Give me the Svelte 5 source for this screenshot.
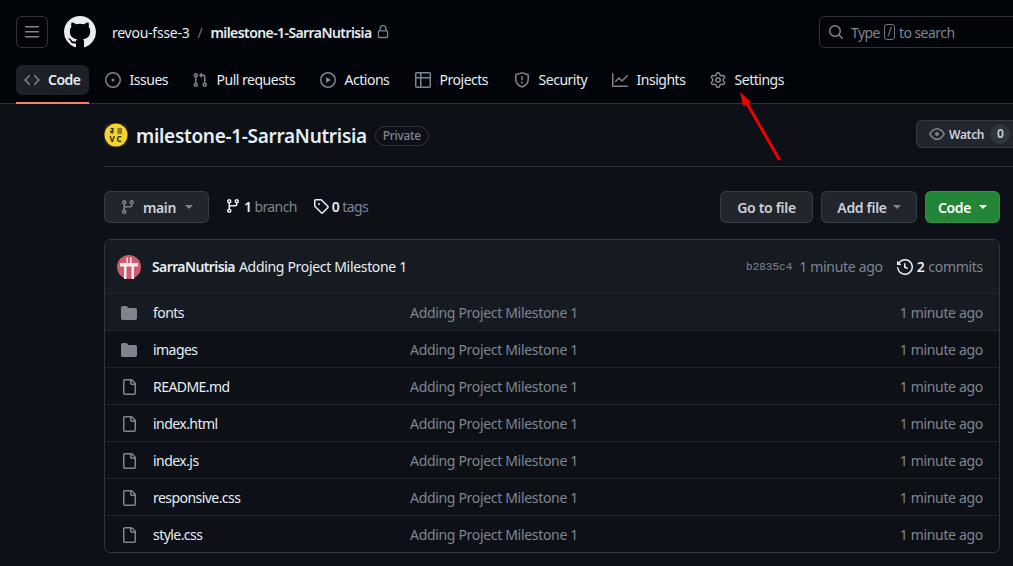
<script>
  const icons = {
    bars: 'M1 2.75A.75.75 0 0 1 1.75 2h12.5a.75.75 0 0 1 0 1.5H1.75A.75.75 0 0 1 1 2.75Zm0 5A.75.75 0 0 1 1.75 7h12.5a.75.75 0 0 1 0 1.5H1.75A.75.75 0 0 1 1 7.75ZM1.75 12h12.5a.75.75 0 0 1 0 1.5H1.75a.75.75 0 0 1 0-1.5Z',
    github: 'M8 0c4.42 0 8 3.58 8 8a8.013 8.013 0 0 1-5.45 7.59c-.4.08-.55-.17-.55-.38 0-.27.01-1.13.01-2.2 0-.75-.25-1.23-.54-1.48 1.78-.2 3.65-.88 3.65-3.95 0-.88-.31-1.59-.82-2.15.08-.2.36-1.02-.08-2.12 0 0-.67-.22-2.2.82-.64-.18-1.32-.27-2-.27-.68 0-1.36.09-2 .27-1.53-1.03-2.2-.82-2.2-.82-.44 1.1-.16 1.92-.08 2.12-.51.56-.82 1.28-.82 2.15 0 3.06 1.86 3.75 3.64 3.95-.23.2-.44.55-.51 1.07-.46.21-1.61.55-2.33-.66-.15-.24-.6-.83-1.23-.82-.67.01-.27.38.01.53.34.19.73.9.82 1.13.16.45.68 1.31 2.69.94 0 .67.01 1.3.01 1.49 0 .21-.15.45-.55.38A7.995 7.995 0 0 1 0 8c0-4.42 3.58-8 8-8Z',
    code: 'm11.28 3.22 4.25 4.25a.75.75 0 0 1 0 1.06l-4.25 4.25a.749.749 0 0 1-1.275-.326.749.749 0 0 1 .215-.734L13.94 8l-3.72-3.72a.749.749 0 0 1 .326-1.275.749.749 0 0 1 .734.215Zm-6.56 0a.751.751 0 0 1 1.042.018.751.751 0 0 1 .018 1.042L2.06 8l3.72 3.72a.749.749 0 0 1-.326 1.275.749.749 0 0 1-.734-.215L.47 8.53a.75.75 0 0 1 0-1.06Z',
    issue: 'M8 9.5a1.5 1.5 0 1 0 0-3 1.5 1.5 0 0 0 0 3ZM8 0a8 8 0 1 1 0 16A8 8 0 0 1 8 0ZM1.5 8a6.5 6.5 0 1 0 13 0 6.5 6.5 0 0 0-13 0Z',
    pull: 'M1.5 3.25a2.25 2.25 0 1 1 3 2.122v5.256a2.251 2.251 0 1 1-1.5 0V5.372A2.25 2.25 0 0 1 1.5 3.25Zm5.677-.177L9.573.677A.25.25 0 0 1 10 .854V2.5h1A2.5 2.5 0 0 1 13.5 5v5.628a2.251 2.251 0 1 1-1.5 0V5a1 1 0 0 0-1-1h-1v1.646a.25.25 0 0 1-.427.177L7.177 3.427a.25.25 0 0 1 0-.354ZM3.75 2.5a.75.75 0 1 0 0 1.5.75.75 0 0 0 0-1.5Zm0 9.5a.75.75 0 1 0 0 1.5.75.75 0 0 0 0-1.5Zm8.25.75a.75.75 0 1 0 1.5 0 .75.75 0 0 0-1.5 0Z',
    play: 'M8 0a8 8 0 1 1 0 16A8 8 0 0 1 8 0ZM1.5 8a6.5 6.5 0 1 0 13 0 6.5 6.5 0 0 0-13 0Zm4.879-2.773 4.264 2.559a.25.25 0 0 1 0 .428l-4.264 2.559A.25.25 0 0 1 6 10.559V5.442a.25.25 0 0 1 .379-.215Z',
    table: 'M0 1.75C0 .784.784 0 1.75 0h12.5C15.216 0 16 .784 16 1.75v12.5A1.75 1.75 0 0 1 14.25 16H1.75A1.75 1.75 0 0 1 0 14.25ZM6.5 6.5v8h7.75a.25.25 0 0 0 .25-.25V6.5Zm8-1.5V1.75a.25.25 0 0 0-.25-.25H6.5V5Zm-13 1.5v7.75c0 .138.112.25.25.25H5v-8ZM5 5V1.5H1.75a.25.25 0 0 0-.25.25V5Z',
    shield: 'M7.467.133a1.748 1.748 0 0 1 1.066 0l5.25 1.68A1.75 1.75 0 0 1 15 3.48V7c0 1.566-.32 3.182-1.303 4.682-.983 1.498-2.585 2.813-5.032 3.855a1.697 1.697 0 0 1-1.33 0c-2.447-1.042-4.049-2.357-5.032-3.855C1.32 10.182 1 8.566 1 7V3.48a1.75 1.75 0 0 1 1.217-1.667Zm.61 1.429a.25.25 0 0 0-.153 0l-5.25 1.68a.25.25 0 0 0-.174.238V7c0 1.358.275 2.666 1.057 3.86.784 1.194 2.121 2.34 4.366 3.297a.196.196 0 0 0 .154 0c2.245-.956 3.582-2.104 4.366-3.298C13.225 9.666 13.5 8.36 13.5 7V3.48a.251.251 0 0 0-.174-.237l-5.25-1.68ZM8.75 4.75v3a.75.75 0 0 1-1.5 0v-3a.75.75 0 0 1 1.5 0ZM9 10.5a1 1 0 1 1-2 0 1 1 0 0 1 2 0Z',
    graph: 'M1.5 1.75V13.5h13.75a.75.75 0 0 1 0 1.5H.75a.75.75 0 0 1-.75-.75V1.75a.75.75 0 0 1 1.5 0Zm14.28 2.53-5.25 5.25a.75.75 0 0 1-1.06 0L7 7.06 4.28 9.78a.751.751 0 0 1-1.042-.018.751.751 0 0 1-.018-1.042l3.25-3.25a.75.75 0 0 1 1.06 0L10 7.94l4.72-4.72a.751.751 0 0 1 1.042.018.751.751 0 0 1 .018 1.042Z',
    gear: 'M8 0a8.2 8.2 0 0 1 .701.031C9.444.095 9.99.645 10.16 1.29l.288 1.107c.018.066.079.158.212.224.231.114.454.243.668.386.123.082.233.09.299.071l1.103-.303c.644-.176 1.392.021 1.82.63.27.385.506.792.704 1.218.315.675.111 1.422-.364 1.891l-.814.806c-.049.048-.098.147-.088.294.016.257.016.515 0 .772-.01.147.038.246.088.294l.814.806c.475.469.679 1.216.364 1.891a7.977 7.977 0 0 1-.704 1.217c-.428.61-1.176.807-1.82.63l-1.102-.302c-.067-.019-.177-.011-.3.071a5.909 5.909 0 0 1-.668.386c-.133.066-.194.158-.211.224l-.29 1.106c-.168.646-.715 1.196-1.458 1.26a8.006 8.006 0 0 1-1.402 0c-.743-.064-1.289-.614-1.458-1.26l-.289-1.106c-.018-.066-.079-.158-.212-.224a5.738 5.738 0 0 1-.668-.386c-.123-.082-.233-.09-.299-.071l-1.103.303c-.644.176-1.392-.021-1.82-.63a8.12 8.12 0 0 1-.704-1.218c-.315-.675-.111-1.422.363-1.891l.815-.806c.05-.048.098-.147.088-.294a6.214 6.214 0 0 1 0-.772c.01-.147-.038-.246-.088-.294l-.815-.806C.635 6.045.431 5.298.746 4.623a7.92 7.92 0 0 1 .704-1.217c.428-.61 1.176-.807 1.82-.63l1.102.302c.067.019.177.011.3-.071.214-.143.437-.272.668-.386.133-.066.194-.158.211-.224l.29-1.106C6.009.645 6.556.095 7.299.03 7.53.01 7.764 0 8 0Zm-.571 1.525c-.036.003-.108.036-.137.146l-.289 1.105c-.147.561-.549.967-.998 1.189-.173.086-.34.183-.5.29-.417.278-.97.423-1.529.27l-1.103-.303c-.109-.03-.175.016-.195.045-.22.312-.412.644-.573.99-.014.031-.021.11.059.19l.815.806c.411.406.562.957.53 1.456a4.709 4.709 0 0 0 0 .582c.032.499-.119 1.05-.53 1.456l-.815.806c-.081.08-.073.159-.059.19.162.346.353.677.573.989.02.03.085.076.195.046l1.102-.303c.56-.153 1.113-.008 1.53.27.161.107.328.204.501.29.447.222.85.629.997 1.189l.289 1.105c.029.109.101.143.137.146a6.6 6.6 0 0 0 1.142 0c.036-.003.108-.036.137-.146l.289-1.105c.147-.561.549-.967.998-1.189.173-.086.34-.183.5-.29.417-.278.97-.423 1.529-.27l1.103.303c.109.029.175-.016.195-.045.22-.313.411-.644.573-.99.014-.031.021-.11-.059-.19l-.815-.806c-.411-.406-.562-.957-.53-1.456a4.709 4.709 0 0 0 0-.582c-.032-.499.119-1.05.53-1.456l.815-.806c.081-.08.073-.159.059-.19a6.464 6.464 0 0 0-.573-.989c-.02-.03-.085-.076-.195-.046l-1.102.303c-.56.153-1.113.008-1.53-.27a4.44 4.44 0 0 0-.501-.29c-.447-.222-.85-.629-.997-1.189l-.289-1.105c-.029-.11-.101-.143-.137-.146a6.6 6.6 0 0 0-1.142 0ZM11 8a3 3 0 1 1-6 0 3 3 0 0 1 6 0ZM9.5 8a1.5 1.5 0 1 0-3.001.001A1.5 1.5 0 0 0 9.5 8Z',
    lock: 'M4 4a4 4 0 0 1 8 0v2h.25c.966 0 1.75.784 1.75 1.75v5.5A1.75 1.75 0 0 1 12.25 15h-8.5A1.75 1.75 0 0 1 2 13.25v-5.5C2 6.784 2.784 6 3.75 6H4Zm8.25 3.5h-8.5a.25.25 0 0 0-.25.25v5.5c0 .138.112.25.25.25h8.5a.25.25 0 0 0 .25-.25v-5.5a.25.25 0 0 0-.25-.25ZM10.5 6V4a2.5 2.5 0 1 0-5 0v2Z',
    search: 'M10.68 11.74a6 6 0 0 1-7.922-8.982 6 6 0 0 1 8.982 7.922l3.04 3.04a.749.749 0 0 1-.326 1.275.749.749 0 0 1-.734-.215ZM11.5 7a4.499 4.499 0 1 0-8.997 0A4.499 4.499 0 0 0 11.5 7Z',
    eye: 'M8 2c1.981 0 3.671.992 4.933 2.078 1.27 1.091 2.187 2.345 2.637 3.023a1.62 1.62 0 0 1 0 1.798c-.45.678-1.367 1.932-2.637 3.023C11.67 13.008 9.981 14 8 14c-1.981 0-3.671-.992-4.933-2.078C1.797 10.83.88 9.576.43 8.898a1.62 1.62 0 0 1 0-1.798c.45-.677 1.367-1.931 2.637-3.022C4.33 2.992 6.019 2 8 2ZM1.679 7.932a.12.12 0 0 0 0 .136c.411.622 1.241 1.75 2.366 2.717C5.176 11.758 6.527 12.5 8 12.5c1.473 0 2.825-.742 3.955-1.715 1.124-.967 1.954-2.096 2.366-2.717a.12.12 0 0 0 0-.136c-.412-.621-1.242-1.75-2.366-2.717C10.824 4.242 9.473 3.5 8 3.5c-1.473 0-2.825.742-3.955 1.715-1.124.967-1.954 2.096-2.366 2.717ZM8 10a2 2 0 1 1-.001-3.999A2 2 0 0 1 8 10Z',
    branch: 'M9.5 3.25a2.25 2.25 0 1 1 3 2.122V6A2.5 2.5 0 0 1 10 8.5H6a1 1 0 0 0-1 1v1.128a2.251 2.251 0 1 1-1.5 0V5.372a2.25 2.25 0 1 1 1.5 0v1.836A2.493 2.493 0 0 1 6 7h4a1 1 0 0 0 1-1v-.628A2.25 2.25 0 0 1 9.5 3.25Zm-6 0a.75.75 0 1 0 1.5 0 .75.75 0 0 0-1.5 0Zm8.25-.75a.75.75 0 1 0 0 1.5.75.75 0 0 0 0-1.5ZM4.25 12a.75.75 0 1 0 0 1.5.75.75 0 0 0 0-1.5Z',
    tag: 'M1 7.775V2.75C1 1.784 1.784 1 2.75 1h5.025c.464 0 .91.184 1.238.513l6.25 6.25a1.75 1.75 0 0 1 0 2.474l-5.026 5.026a1.75 1.75 0 0 1-2.474 0l-6.25-6.25A1.752 1.752 0 0 1 1 7.775Zm1.5 0c0 .066.026.13.073.177l6.25 6.25a.25.25 0 0 0 .354 0l5.025-5.025a.25.25 0 0 0 0-.354l-6.25-6.25a.25.25 0 0 0-.177-.073H2.75a.25.25 0 0 0-.25.25ZM6 5a1 1 0 1 1 0 2 1 1 0 0 1 0-2Z',
    history: 'm.427 1.927 1.215 1.215a8.002 8.002 0 1 1-1.6 5.685.75.75 0 1 1 1.493-.154 6.5 6.5 0 1 0 1.18-4.458l1.358 1.358A.25.25 0 0 1 3.896 6H.25A.25.25 0 0 1 0 5.75V2.104a.25.25 0 0 1 .427-.177ZM7.75 4a.75.75 0 0 1 .75.75v2.992l2.028.812a.75.75 0 0 1-.557 1.392l-2.5-1A.751.751 0 0 1 7 8.25v-3.5A.75.75 0 0 1 7.75 4Z',
    file: 'M2 1.75C2 .784 2.784 0 3.75 0h6.586c.464 0 .909.184 1.237.513l2.914 2.914c.329.328.513.773.513 1.237v9.586A1.75 1.75 0 0 1 13.25 16h-9.5A1.75 1.75 0 0 1 2 14.25Zm1.75-.25a.25.25 0 0 0-.25.25v12.5c0 .138.112.25.25.25h9.5a.25.25 0 0 0 .25-.25V6h-2.75A1.75 1.75 0 0 1 9 4.25V1.5Zm6.75.062V4.25c0 .138.112.25.25.25h2.688l-.011-.013-2.914-2.914-.013-.011Z',
    folder: 'M1.75 1A1.75 1.75 0 0 0 0 2.75v10.5C0 14.216.784 15 1.75 15h12.5A1.75 1.75 0 0 0 16 13.25v-8.5A1.75 1.75 0 0 0 14.25 3H7.5a.25.25 0 0 1-.2-.1l-.9-1.2C6.07 1.26 5.55 1 5 1H1.75Z'
  }

  // width = distance to the next tab
  const tabs = [
    { name: 'Code', icon: 'code', width: 81, active: true },
    { name: 'Issues', icon: 'issue', width: 87 },
    { name: 'Pull requests', icon: 'pull', width: 128 },
    { name: 'Actions', icon: 'play', width: 95 },
    { name: 'Projects', icon: 'table', width: 99 },
    { name: 'Security', icon: 'shield', width: 98 },
    { name: 'Insights', icon: 'graph', width: 98 },
    { name: 'Settings', icon: 'gear', width: 90 }
  ]

  const files = [
    { name: 'fonts', icon: 'folder', hover: true },
    { name: 'images', icon: 'folder' },
    { name: 'README.md', icon: 'file' },
    { name: 'index.html', icon: 'file' },
    { name: 'index.js', icon: 'file' },
    { name: 'responsive.css', icon: 'file' },
    { name: 'style.css', icon: 'file' }
  ]
</script>

{#snippet icon(name, size = 16)}
  <svg class="icon" width={size} height={size} viewBox="0 0 16 16" fill="currentColor" fill-rule="evenodd"><path d={icons[name]} /></svg>
{/snippet}

<div class="page">
  <header>
    <div class="toprow">
      <button class="menu">{@render icon('bars')}</button>
      <span class="logo">{@render icon('github', 32)}</span>
      <div class="crumbs">
        <span>revou-fsse-3</span>
        <span class="slash">/</span>
        <strong>milestone-1-SarraNutrisia</strong>
        <span class="lock">{@render icon('lock', 14)}</span>
      </div>
      <div class="search">
        {@render icon('search')}
        <span>Type</span><kbd>/</kbd><span>to search</span>
      </div>
    </div>
    <nav>
      {#each tabs as tab}
        <div class="tabcell" style="width:{tab.width}px">
          <a class="tab" class:active={tab.active}>
            <span class="tabicon">{@render icon(tab.icon)}</span>
            <span class="tablabel">{tab.name}</span>
          </a>
        </div>
      {/each}
    </nav>
  </header>

  <main>
    <div class="repohead">
      <svg class="repoavatar" width="24" height="24" viewBox="0 0 24 24">
        <rect width="24" height="24" rx="6" fill="#1c1f26" />
        <circle cx="12" cy="12" r="11.5" fill="#f5d32e" />
        <path d="M6.5 5.5h2.5v2.6H7v2.4M7 8l2.2 2.4M13.5 6h4.5M13.5 8h4.5M13.5 10h4.5" fill="none" stroke="#222" stroke-width="1.1" />
        <text x="5.5" y="18.5" class="avatartext">V</text>
        <text x="12.5" y="18.5" class="avatartext">C</text>
      </svg>
      <h1>milestone-1-SarraNutrisia</h1>
      <span class="badge">Private</span>
      <button class="btn watch">{@render icon('eye')}<span>Watch</span><span class="count">0</span></button>
    </div>

    <div class="toolbar">
      <button class="btn branchbtn">
        <span class="muted">{@render icon('branch')}</span>
        <span>main</span>
        <i class="caret"></i>
      </button>
      <span class="stat">{@render icon('branch')}<b>1</b> branch</span>
      <span class="stat">{@render icon('tag')}<b>0</b> tags</span>
      <div class="spacer"></div>
      <button class="btn gotofile">Go to file</button>
      <button class="btn addfile">Add file <i class="caret"></i></button>
      <button class="btn green">Code <i class="caret"></i></button>
    </div>

    <div class="box">
      <div class="commit">
        <svg class="commitavatar" width="24" height="24" viewBox="0 0 24 24">
          <circle cx="12" cy="12" r="12" fill="#cf5a70" />
          <path d="M3 8h18v3.500h-4V24h-2.500V11.500h-5V24H7V11.500H3zM9.500 2.500h1.500v5.500H9.500zM13 2.500h1.500v5.500H13z" fill="#f3eaea" />
        </svg>
        <b>SarraNutrisia</b>
        <span class="commitmsg">Adding Project Milestone 1</span>
        <div class="spacer"></div>
        <code>b2835c4</code>
        <span class="ago">1 minute ago</span>
        <span class="commits">{@render icon('history')}<b>2</b> commits</span>
      </div>
      {#each files as file}
        <div class="row" class:hover={file.hover}>
          <span class="fileicon">{@render icon(file.icon)}</span>
          <span class="filename">{file.name}</span>
          <span class="filemsg">Adding Project Milestone 1</span>
          <span class="filetime">1 minute ago</span>
        </div>
      {/each}
    </div>
  </main>

  <!-- annotation drawn on top of the screenshot -->
  <svg class="arrow" width="60" height="80" viewBox="0 0 60 80">
    <path d="M40 69 6 10" stroke="#f00000" stroke-width="3" stroke-linecap="round" />
    <path d="M1 2 12 12 4 16Z" fill="#f00000" />
  </svg>
</div>

<style>
  :global(body) {
    margin: 0;
    background: #0d1117;
  }

  .page {
    position: relative;
    width: 1013px;
    height: 566px;
    overflow: hidden;
    background: #0d1117;
    color: #e6edf3;
    font-family: "Noto Sans", "Open Sans", sans-serif;
    font-size: 14px;
    letter-spacing: -0.32px;
  }

  .icon {
    display: block;
    flex: none;
  }

  button {
    font: inherit;
    letter-spacing: inherit;
  }

  header {
    height: 87px;
    background: #010409;
    border-bottom: 1px solid #30363d;
    padding: 16px 0 0 16px;
  }

  .toprow {
    display: flex;
    align-items: center;
    height: 32px;
  }

  .menu {
    width: 32px;
    height: 32px;
    padding: 0;
    display: grid;
    place-items: center;
    background: transparent;
    border: 1px solid #30363d;
    border-radius: 6px;
    color: #7d8590;
  }

  .logo {
    margin-left: 16px;
    color: #e6edf3;
  }

  .crumbs {
    display: flex;
    align-items: center;
    margin-left: 16px;
    letter-spacing: -0.25px;
  }

  .slash {
    color: #6e7681;
    margin: 0 8px;
  }

  .crumbs strong {
    font-weight: 600;
    letter-spacing: -0.58px;
  }

  .lock {
    margin-left: 4px;
    color: #7d8590;
  }

  .search {
    margin-left: auto;
    flex: none;
    width: 230px;
    height: 32px;
    margin-right: -36px;
    box-sizing: border-box;
    border: 1px solid #30363d;
    border-radius: 6px;
    display: flex;
    align-items: center;
    padding-left: 8px;
    color: #7d8590;
    gap: 4px;
    letter-spacing: -0.55px;
  }

  .search span:first-of-type {
    margin-left: 3px;
  }

  kbd {
    font: inherit;
    font-size: 12px;
    width: 9px;
    height: 14px;
    border: 1px solid #6e7681;
    border-radius: 3px;
    text-align: center;
    line-height: 14px;
  }

  nav {
    display: flex;
    margin-top: 17px;
    height: 38px;
    letter-spacing: -0.5px;
  }

  .tabcell {
    flex: none;
  }

  .tab {
    position: relative;
    display: inline-flex;
    align-items: center;
    height: 30px;
    padding: 0 8px;
    border-radius: 6px;
    white-space: nowrap;
    color: #e6edf3;
    gap: 8.6px;
  }

  .tab.active {
    gap: 8px;
  }

  .tabicon {
    color: #7d8590;
  }

  .tablabel {
    margin-bottom: 2px;
  }

  .tab.active {
    background: #1c2027;
    font-weight: 600;
  }

  .tab.active::after {
    content: "";
    position: absolute;
    left: 0;
    right: 0;
    bottom: -9px;
    height: 2px;
    background: #f78166;
  }

  main {
    padding: 0 13px 0 104px;
  }

  .repohead {
    display: flex;
    align-items: center;
    box-sizing: border-box;
    margin-right: -13px;
    height: 63px;
    padding-top: 2px;
    border-bottom: 1px solid #30363d;
    white-space: nowrap;
  }

  .repoavatar {
    flex: none;
    margin-right: 8px;
    margin-bottom: 2px;
  }

  .avatartext {
    font-size: 8px;
    font-weight: 700;
    fill: #222;
    letter-spacing: 0;
  }

  h1 {
    margin: 0;
    font-size: 19px;
    font-weight: 600;
    letter-spacing: -0.3px;
  }

  .badge {
    margin-left: 8px;
    height: 20px;
    line-height: 18px;
    box-sizing: border-box;
    padding: 0 7px;
    border: 1px solid #30363d;
    border-radius: 10px;
    font-size: 12px;
    font-weight: 500;
    color: #7d8590;
  }

  .btn {
    display: inline-flex;
    align-items: center;
    justify-content: center;
    box-sizing: border-box;
    background: #21262d;
    border: 1px solid rgba(240, 246, 252, 0.1);
    border-radius: 6px;
    color: #c9d1d9;
    font-weight: 600;
    height: 32px;
    padding: 0;
  }

  .watch {
    flex: none;
    margin-left: auto;
    margin-right: -40px;
    margin-bottom: 4px;
    width: 137px;
    height: 28px;
    justify-content: flex-start;
    padding-left: 12px;
    font-size: 12px;
    gap: 4px;
    color: #c9d1d9;
  }

  .watch :global(svg) {
    color: #7d8590;
  }

  .count {
    margin-left: 2px;
    width: 20px;
    height: 20px;
    line-height: 20px;
    text-align: center;
    border-radius: 10px;
    background: #30363d;
  }

  .toolbar {
    display: flex;
    align-items: center;
    margin-top: 24px;
    height: 32px;
  }

  .spacer {
    flex: 1;
  }

  .branchbtn {
    width: 105px;
    gap: 7px;
  }

  .muted {
    color: #7d8590;
  }

  .caret {
    display: inline-block;
    width: 0;
    height: 0;
    border-left: 4px solid transparent;
    border-right: 4px solid transparent;
    border-top: 4px solid #7d8590;
    margin-left: 2px;
  }

  .stat {
    display: inline-flex;
    align-items: center;
    color: #7d8590;
    gap: 3px;
    margin-left: 16px;
    margin-bottom: 2px;
    letter-spacing: -0.6px;
  }

  .stat :global(svg) {
    color: #e6edf3;
  }

  .stat b {
    color: #e6edf3;
    font-weight: 600;
  }

  .gotofile {
    width: 93px;
  }

  .addfile {
    width: 96px;
    margin-left: 8px;
    gap: 4px;
  }

  .green {
    width: 75px;
    margin-left: 8px;
    gap: 6px;
    background: #238636;
    color: #fff;
  }

  .green .caret {
    border-top-color: #fff;
  }

  .box {
    margin-top: 16px;
    border: 1px solid #30363d;
    border-radius: 6px;
    overflow: hidden;
  }

  .commit {
    display: flex;
    align-items: center;
    height: 53px;
    padding: 0 16px 0 12px;
    background: #161b22;
    white-space: nowrap;
  }

  .commitavatar {
    flex: none;
    margin-right: 11px;
  }

  .commit > b {
    font-weight: 600;
    letter-spacing: -0.6px;
  }

  .commitmsg {
    margin-left: 4px;
  }

  code {
    font-family: "Liberation Mono", monospace;
    font-size: 11px;
    color: #7d8590;
    letter-spacing: 0;
  }

  .ago {
    margin-left: 7px;
    color: #7d8590;
  }

  .commits {
    display: inline-flex;
    align-items: center;
    margin-left: 14px;
    gap: 4px;
    color: #7d8590;
    letter-spacing: -0.3px;
  }

  .commits :global(svg) {
    color: #e6edf3;
  }

  .commits b {
    color: #e6edf3;
    font-weight: 600;
  }

  .row {
    display: grid;
    grid-template-columns: 48px 257px 1fr auto;
    align-items: center;
    box-sizing: border-box;
    height: 37px;
    padding-top: 1px;
    border-top: 1px solid #21262d;
    padding-right: 16px;
  }

  .row.hover {
    background: #161b22;
  }

  .fileicon {
    padding-left: 16px;
    color: #7d8590;
  }

  .filename {
    letter-spacing: -0.55px;
  }

  .filemsg,
  .filetime {
    color: #7d8590;
  }

  .arrow {
    position: absolute;
    left: 739px;
    top: 90px;
  }
</style>
